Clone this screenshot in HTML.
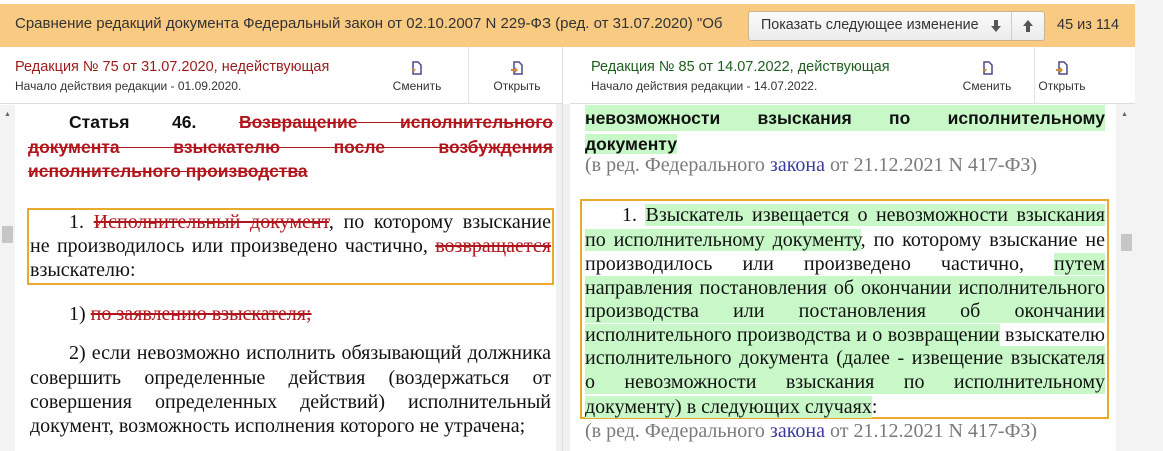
<!DOCTYPE html>
<html><head><meta charset="utf-8"><style>
*{margin:0;padding:0;box-sizing:border-box}
body{width:1163px;height:451px;overflow:hidden;background:#fff;font-family:"Liberation Sans",sans-serif;position:relative}
.abs{position:absolute}
.bar{left:0;top:4px;width:1135px;height:43px;background:#f8ca82}
.title{left:15px;top:15px;font-size:15px;color:#333;white-space:nowrap;width:725px;overflow:hidden}
.btn{left:748px;top:11px;width:297px;height:30px;background:linear-gradient(#fafafa,#ececec);border:1px solid #c9b48f;border-radius:3px}
.hdr{top:47px;height:57px;background:#fff;border-bottom:1px solid #ddd}
.ic{font-size:12px;color:#333;text-align:center;width:80px}
.doc{font-family:"Liberation Serif",serif;font-size:20px;color:#111}
.ln{position:absolute;white-space:nowrap;text-align:justify;text-align-last:justify;height:24px;line-height:24px}
.nl{text-align-last:left}
.del{color:#b0161c;text-decoration:line-through}
.g{background:#c8f8c8}
.h{font-family:"Liberation Sans",sans-serif;font-weight:bold;font-size:17.5px}
.gray{color:#7a7a7a}
.lnk{color:#3b3b9b}
</style></head><body>
<div class="abs" style="left:1135px;top:0;width:28px;height:451px;background:#f3f3f3"></div>
<div class="abs bar"></div>
<div class="abs title">Сравнение редакций документа Федеральный закон от 02.10.2007 N 229-ФЗ (ред. от 31.07.2020) "Об</div>
<div class="abs btn"></div>
<div class="abs" style="left:1011px;top:12px;width:1px;height:28px;background:#ccc"></div>
<div class="abs" style="left:761px;top:17px;font-size:14.3px;color:#333;white-space:nowrap">Показать следующее изменение</div>
<svg class="abs" style="left:990px;top:19px" width="12" height="14" viewBox="0 0 12 14"><path d="M4 1h4v6h3l-5 6-5-6h3z" fill="#555"/></svg>
<svg class="abs" style="left:1022px;top:19px" width="12" height="14" viewBox="0 0 12 14"><path d="M4 13h4V7h3L6 1 1 7h3z" fill="#555"/></svg>
<div class="abs" style="left:1057px;top:17px;font-size:14.5px;color:#333">45 из 114</div>

<!-- left header -->
<div class="abs hdr" style="left:0;width:563px"></div>
<div class="abs" style="left:15px;top:59px;font-size:14.5px;color:#9b1b1b">Редакция № 75 от 31.07.2020, недействующая</div>
<div class="abs" style="left:15px;top:79px;font-size:12px;color:#333">Начало действия редакции - 01.09.2020.</div>
<div class="abs" style="left:468px;top:47px;width:1px;height:57px;background:#e2e2e2"></div>
<!-- right header -->
<div class="abs hdr" style="left:570px;width:565px"></div>
<div class="abs" style="left:591px;top:59px;font-size:14.5px;color:#1f5d1f">Редакция № 85 от 14.07.2022, действующая</div>
<div class="abs" style="left:591px;top:79px;font-size:12px;color:#333">Начало действия редакции - 14.07.2022.</div>
<div class="abs" style="left:1034px;top:47px;width:1px;height:57px;background:#e2e2e2"></div>

<!-- icons -->
<svg class="abs" style="left:408px;top:60px" width="16" height="16" viewBox="0 0 16 16"><path d="M5 2h5l3 3v9H5z" fill="#fff" stroke="#4a4a8a" stroke-width="1.5"/><path d="M4 9h4l-2 3z" fill="#d08a30"/></svg>
<svg class="abs" style="left:509px;top:60px" width="16" height="16" viewBox="0 0 16 16"><path d="M5 2h5l3 3v9H5z" fill="#fff" stroke="#4a4a8a" stroke-width="1.5"/><path d="M2 9h4v-2l3 3-3 3v-2H2z" fill="#d08a30"/></svg>
<svg class="abs" style="left:979px;top:60px" width="16" height="16" viewBox="0 0 16 16"><path d="M5 2h5l3 3v9H5z" fill="#fff" stroke="#4a4a8a" stroke-width="1.5"/><path d="M4 9h4l-2 3z" fill="#d08a30"/></svg>
<svg class="abs" style="left:1054px;top:60px" width="16" height="16" viewBox="0 0 16 16"><path d="M5 2h5l3 3v9H5z" fill="#fff" stroke="#4a4a8a" stroke-width="1.5"/><path d="M2 9h4v-2l3 3-3 3v-2H2z" fill="#d08a30"/></svg>
<div class="abs ic" style="left:377px;top:79px">Сменить</div>
<div class="abs ic" style="left:477px;top:79px">Открыть</div>
<div class="abs ic" style="left:947px;top:79px">Сменить</div>
<div class="abs ic" style="left:1022px;top:79px">Открыть</div>

<!-- separators / scrollbars -->
<div class="abs" style="left:0;top:105px;width:15px;height:346px;background:#f3f3f3"></div>
<div class="abs" style="left:4px;top:111px;font-size:7px;color:#666">▲</div>
<div class="abs" style="left:2px;top:226px;width:11px;height:17px;background:#c6c6c6"></div>
<div class="abs" style="left:556px;top:104px;width:14px;height:347px;background:#f0f0f0"></div>
<div class="abs" style="left:562px;top:47px;width:1px;height:404px;background:#ddd"></div>
<div class="abs" style="left:1116px;top:104px;width:19px;height:347px;background:#f3f3f3"></div>
<div class="abs" style="left:1121px;top:111px;font-size:7px;color:#666">▲</div>
<div class="abs" style="left:1121px;top:234px;width:11px;height:17px;background:#c6c6c6"></div>

<!-- left content -->
<div class="doc">
<div class="ln h" style="left:28px;top:110px;width:525px;padding-left:41px">Статья 46. <span class="del">Возвращение исполнительного</span></div>
<div class="ln h del" style="left:28px;top:135px;width:525px">документа взыскателю после возбуждения</div>
<div class="ln h del nl" style="left:28px;top:159px;width:525px">исполнительного производства</div>
<div class="abs" style="left:27px;top:208px;width:527px;height:77px;border:2px solid #e9a92c"></div>
<div class="ln" style="left:30px;top:210px;width:521px;padding-left:39px">1. <span class="del">Исполнительный документ</span>, по которому взыскание</div>
<div class="ln" style="left:30px;top:234px;width:521px">не производилось или произведено частично, <span class="del">возвращается</span></div>
<div class="ln nl" style="left:30px;top:258px;width:521px">взыскателю:</div>
<div class="ln nl" style="left:30px;top:302px;width:521px;padding-left:39px">1) <span class="del">по заявлению взыскателя;</span></div>
<div class="ln" style="left:30px;top:341px;width:521px;padding-left:39px">2) если невозможно исполнить обязывающий должника</div>
<div class="ln" style="left:30px;top:366px;width:521px">совершить определенные действия (воздержаться от</div>
<div class="ln" style="left:30px;top:390px;width:521px">совершения определенных действий) исполнительный</div>
<div class="ln nl" style="left:30px;top:414px;width:521px">документ, возможность исполнения которого не утрачена;</div>

<!-- right content -->
<div class="ln h" style="left:585px;top:105px;width:520px;height:26px;line-height:26px;background:#c8f8c8">невозможности взыскания по исполнительному</div>
<div class="ln h nl" style="left:585px;top:131px;width:520px;height:26px;line-height:26px"><span class="g">документу</span></div>
<div class="ln nl gray" style="left:585px;top:153px;width:520px">(в ред. Федерального <span class="lnk">закона</span> от 21.12.2021 N 417-ФЗ)</div>
<div class="abs" style="left:580px;top:199px;width:529px;height:220px;border:2px solid #e9a92c"></div>
<div class="ln" style="left:585px;top:203px;width:520px;padding-left:37px">1. <span class="g">Взыскатель извещается о невозможности взыскания</span></div>
<div class="ln" style="left:585px;top:228px;width:520px"><span class="g">по исполнительному документу</span>, по которому взыскание не</div>
<div class="ln" style="left:585px;top:252px;width:520px">производилось или произведено частично, <span class="g">путем</span></div>
<div class="ln g" style="left:585px;top:276px;width:520px">направления постановления об окончании исполнительного</div>
<div class="ln g" style="left:585px;top:299px;width:520px">производства или постановления об окончании</div>
<div class="ln" style="left:585px;top:323px;width:520px"><span class="g">исполнительного производства и о возвращении</span> взыскателю</div>
<div class="ln g" style="left:585px;top:346px;width:520px">исполнительного документа (далее - извещение взыскателя</div>
<div class="ln g" style="left:585px;top:370px;width:520px">о невозможности взыскания по исполнительному</div>
<div class="ln nl" style="left:585px;top:395px;width:520px"><span class="g">документу) в следующих случаях</span>:</div>
<div class="ln nl gray" style="left:585px;top:419px;width:520px">(в ред. Федерального <span class="lnk">закона</span> от 21.12.2021 N 417-ФЗ)</div>
</div>
</body></html>
